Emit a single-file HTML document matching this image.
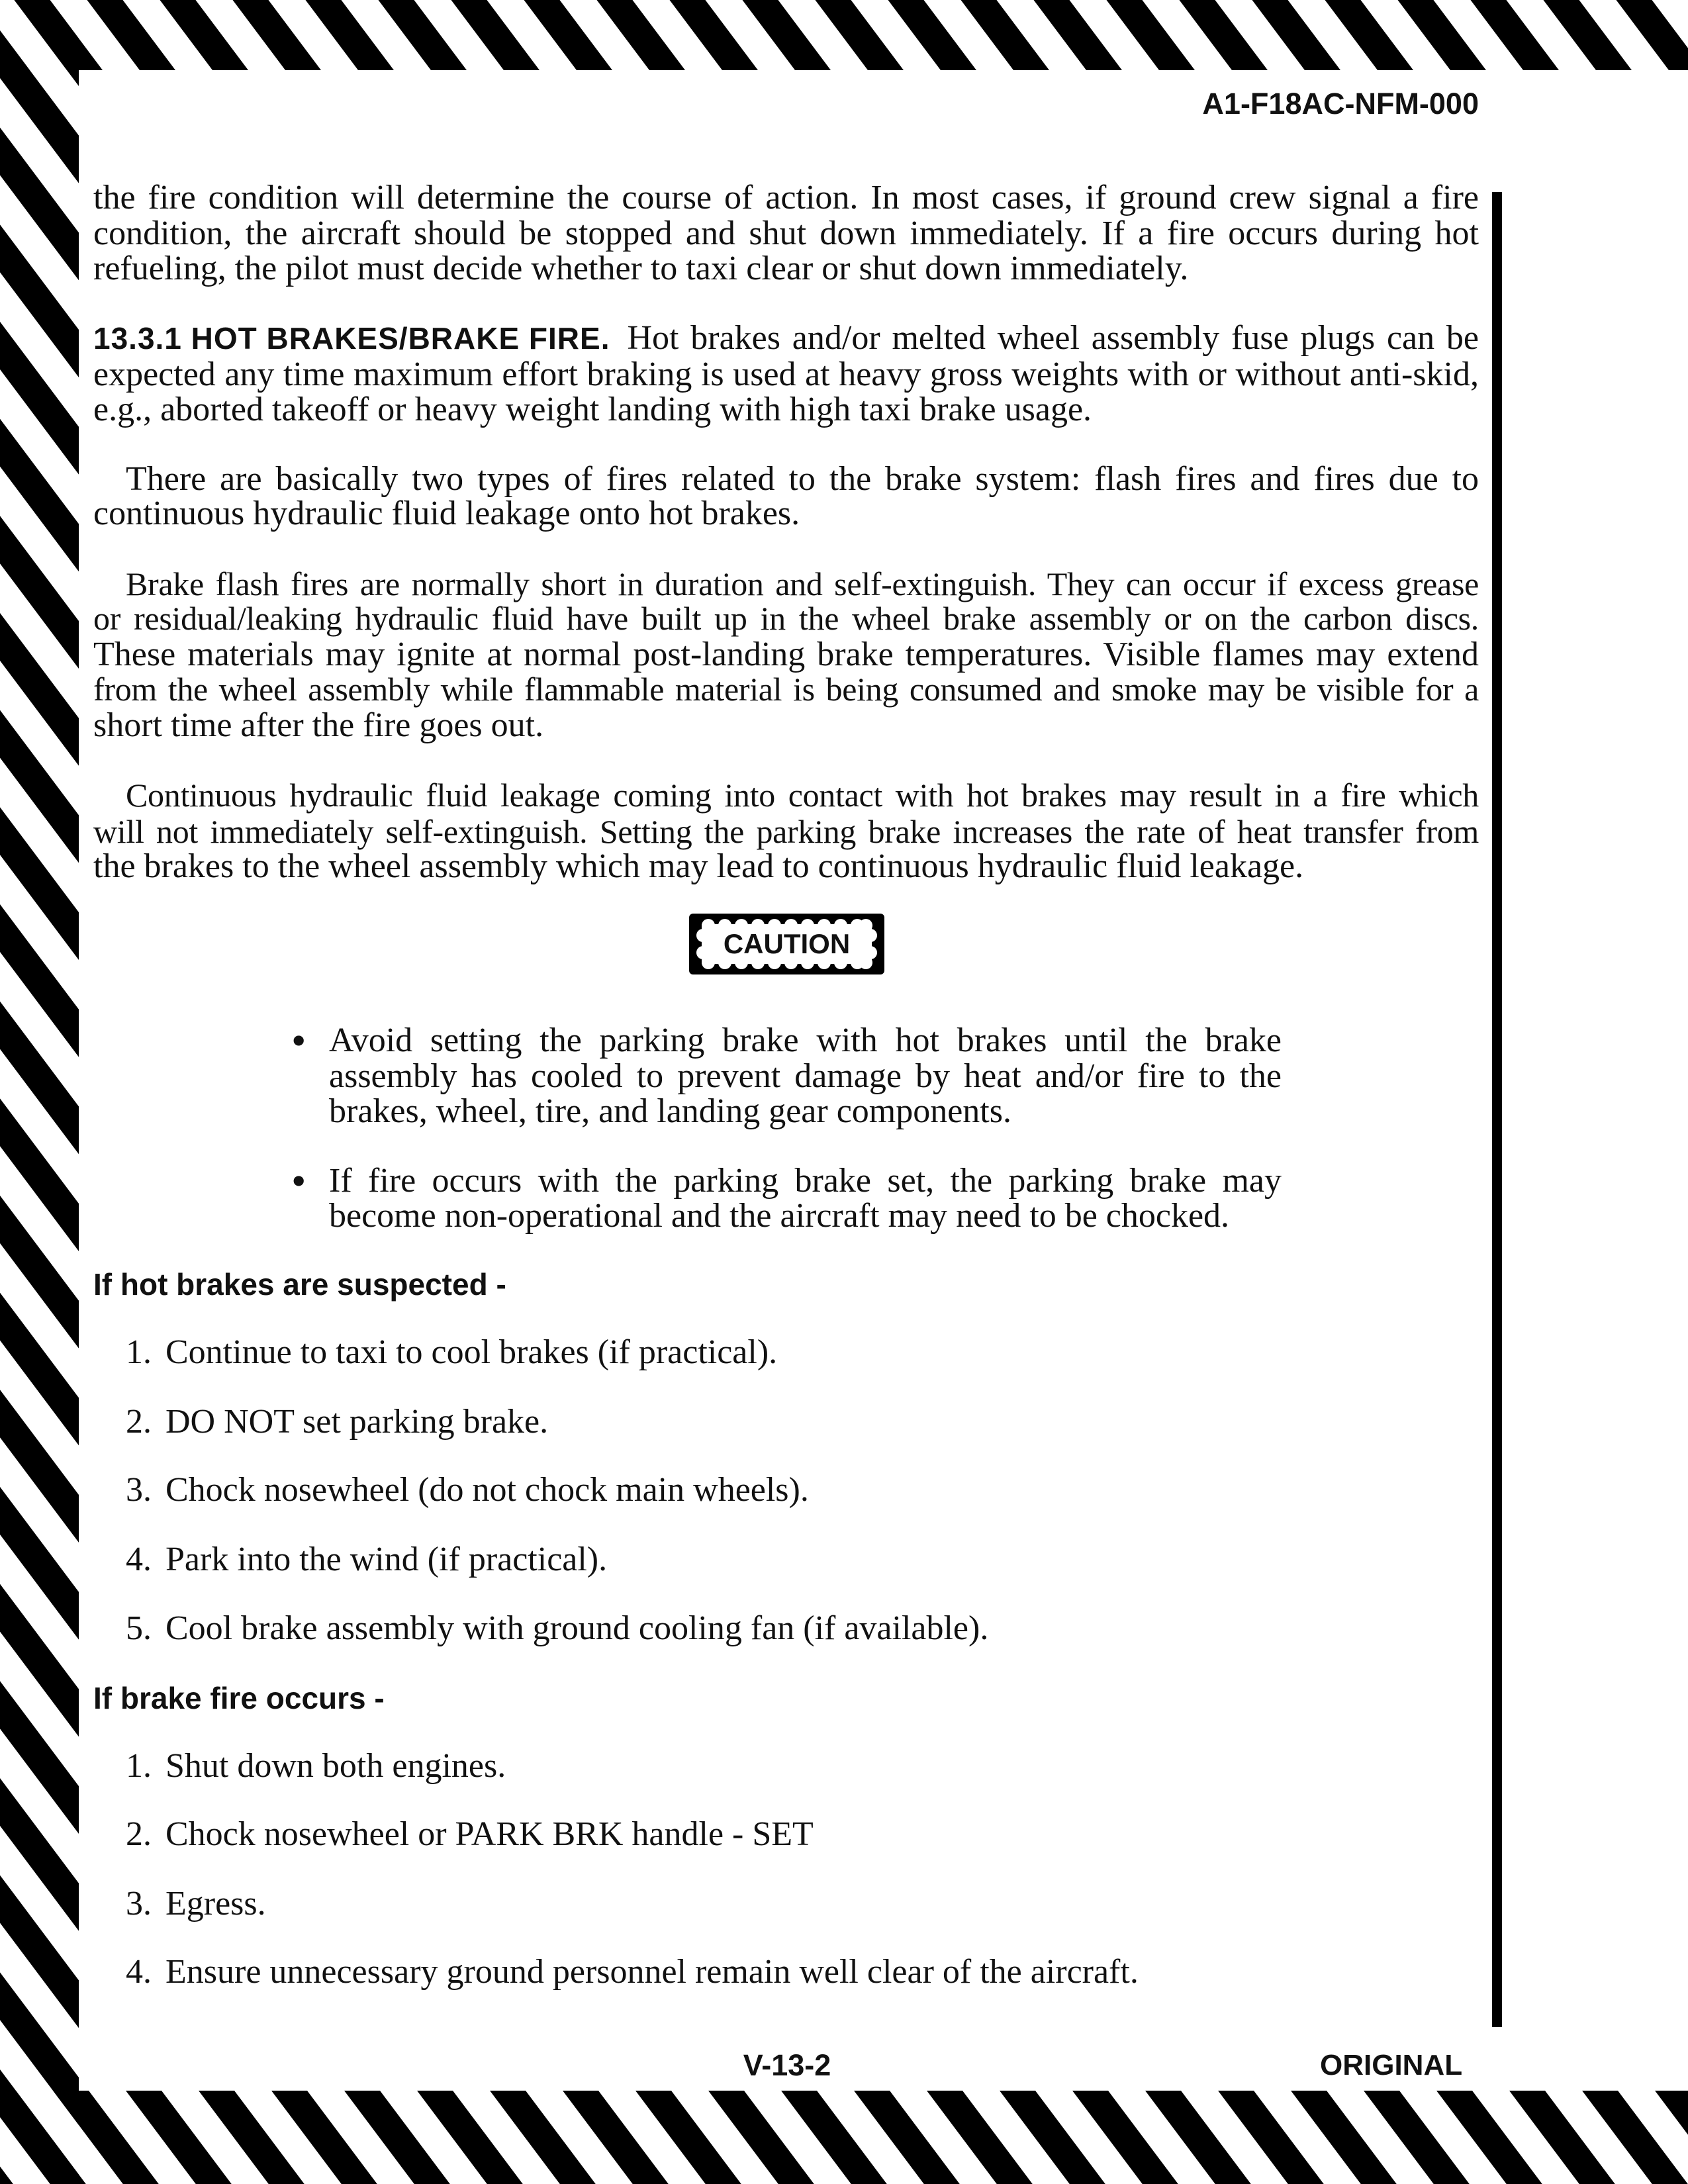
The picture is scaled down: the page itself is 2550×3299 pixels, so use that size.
<!DOCTYPE html>
<html><head><meta charset="utf-8">
<style>
html,body{margin:0;padding:0;}
body{width:2550px;height:3299px;position:relative;overflow:hidden;background:#fff;}
svg.bg{position:absolute;left:0;top:0;}
.l{position:absolute;font-family:"Liberation Serif",serif;font-size:52px;line-height:54px;color:#111;white-space:nowrap;}
.j{text-align:justify;text-align-last:justify;white-space:normal;height:54px;overflow:visible;}
.t{font-size:50px;letter-spacing:-0.3px;}
.s{font-family:"Liberation Sans",sans-serif;font-weight:bold;}
</style></head><body>
<svg class="bg" width="2550" height="3299" viewBox="0 0 2550 3299">
<defs>
<pattern id="st" patternUnits="userSpaceOnUse" width="110" height="20" patternTransform="translate(131.5,0) skewX(36.87)">
<rect x="0" y="0" width="54" height="20" fill="#000"/>
</pattern>
</defs>
<rect x="0" y="0" width="2550" height="106" fill="url(#st)"/>
<rect x="0" y="0" width="119" height="3299" fill="url(#st)"/>
<rect x="0" y="3158" width="2550" height="141" fill="url(#st)"/>
<rect x="2254" y="290" width="15" height="2772" fill="#000"/>
<g>
<rect x="1041" y="1380" width="295" height="92" rx="6" fill="#000"/>
<rect x="1060" y="1396" width="257" height="60" fill="#fff"/>
<g fill="#fff">
<circle cx="1070" cy="1398" r="10"/><circle cx="1095" cy="1398" r="10"/><circle cx="1120" cy="1398" r="10"/><circle cx="1145" cy="1398" r="10"/><circle cx="1170" cy="1398" r="10"/><circle cx="1195" cy="1398" r="10"/><circle cx="1220" cy="1398" r="10"/><circle cx="1245" cy="1398" r="10"/><circle cx="1270" cy="1398" r="10"/><circle cx="1295" cy="1398" r="10"/><circle cx="1308" cy="1398" r="10"/>
<circle cx="1070" cy="1454" r="10"/><circle cx="1095" cy="1454" r="10"/><circle cx="1120" cy="1454" r="10"/><circle cx="1145" cy="1454" r="10"/><circle cx="1170" cy="1454" r="10"/><circle cx="1195" cy="1454" r="10"/><circle cx="1220" cy="1454" r="10"/><circle cx="1245" cy="1454" r="10"/><circle cx="1270" cy="1454" r="10"/><circle cx="1295" cy="1454" r="10"/><circle cx="1308" cy="1454" r="10"/>
<circle cx="1062" cy="1413" r="10"/><circle cx="1062" cy="1439" r="10"/>
<circle cx="1315" cy="1413" r="10"/><circle cx="1315" cy="1439" r="10"/>
</g>
</g>
</svg>

<div class="l s" style="left:1700px;top:130px;width:534px;text-align:right;font-size:45px;">A1-F18AC-NFM-000</div>

<div class="l j" style="left:141px;top:272px;width:2093px;">the fire condition will determine the course of action. In most cases, if ground crew signal a fire</div>
<div class="l j" style="left:141px;top:326px;width:2093px;">condition, the aircraft should be stopped and shut down immediately. If a fire occurs during hot</div>
<div class="l" style="left:141px;top:379px;">refueling, the pilot must decide whether to taxi clear or shut down immediately.</div>

<div class="l" style="left:141px;top:484px;width:2093px;display:flex;justify-content:space-between;"><span class="s" style="font-size:46px;letter-spacing:1px;">13.3.1 HOT BRAKES/BRAKE FIRE.</span><span style="flex:1;margin-left:26px;text-align:justify;text-align-last:justify;white-space:normal;">Hot brakes and/or melted wheel assembly fuse plugs can be</span></div>
<div class="l j" style="left:141px;top:539px;width:2093px;">expected any time maximum effort braking is used at heavy gross weights with or without anti-skid,</div>
<div class="l" style="left:141px;top:592px;">e.g., aborted takeoff or heavy weight landing with high taxi brake usage.</div>

<div class="l j" style="left:190px;top:697px;width:2044px;">There are basically two types of fires related to the brake system: flash fires and fires due to</div>
<div class="l" style="left:141px;top:749px;">continuous hydraulic fluid leakage onto hot brakes.</div>

<div class="l j t" style="left:190px;top:855px;width:2044px;">Brake flash fires are normally short in duration and self-extinguish. They can occur if excess grease</div>
<div class="l j t" style="left:141px;top:907px;width:2093px;">or residual/leaking hydraulic fluid have built up in the wheel brake assembly or on the carbon discs.</div>
<div class="l j" style="left:141px;top:962px;width:2093px;">These materials may ignite at normal post-landing brake temperatures. Visible flames may extend</div>
<div class="l j t" style="left:141px;top:1014px;width:2093px;">from the wheel assembly while flammable material is being consumed and smoke may be visible for a</div>
<div class="l" style="left:141px;top:1069px;">short time after the fire goes out.</div>

<div class="l j t" style="left:190px;top:1174px;width:2044px;">Continuous hydraulic fluid leakage coming into contact with hot brakes may result in a fire which</div>
<div class="l j t" style="left:141px;top:1229px;width:2093px;">will not immediately self-extinguish. Setting the parking brake increases the rate of heat transfer from</div>
<div class="l" style="left:141px;top:1282px;">the brakes to the wheel assembly which may lead to continuous hydraulic fluid leakage.</div>

<div class="l s" style="left:1041px;top:1399px;width:295px;text-align:center;font-size:42px;">CAUTION</div>

<div class="l" style="left:440px;top:1545px;font-size:64px;">•</div>
<div class="l j" style="left:497px;top:1545px;width:1439px;">Avoid setting the parking brake with hot brakes until the brake</div>
<div class="l j" style="left:497px;top:1599px;width:1439px;">assembly has cooled to prevent damage by heat and/or fire to the</div>
<div class="l" style="left:497px;top:1652px;">brakes, wheel, tire, and landing gear components.</div>
<div class="l" style="left:440px;top:1757px;font-size:64px;">•</div>
<div class="l j" style="left:497px;top:1757px;width:1439px;">If fire occurs with the parking brake set, the parking brake may</div>
<div class="l" style="left:497px;top:1810px;">become non-operational and the aircraft may need to be chocked.</div>

<div class="l s" style="left:141px;top:1913px;font-size:46px;">If hot brakes are suspected -</div>
<div class="l" style="left:190px;top:2016px;">1.</div><div class="l" style="left:250px;top:2016px;">Continue to taxi to cool brakes (if practical).</div>
<div class="l" style="left:190px;top:2121px;">2.</div><div class="l" style="left:250px;top:2121px;">DO NOT set parking brake.</div>
<div class="l" style="left:190px;top:2224px;">3.</div><div class="l" style="left:250px;top:2224px;">Chock nosewheel (do not chock main wheels).</div>
<div class="l" style="left:190px;top:2329px;">4.</div><div class="l" style="left:250px;top:2329px;">Park into the wind (if practical).</div>
<div class="l" style="left:190px;top:2433px;">5.</div><div class="l" style="left:250px;top:2433px;">Cool brake assembly with ground cooling fan (if available).</div>

<div class="l s" style="left:141px;top:2538px;font-size:46px;">If brake fire occurs -</div>
<div class="l" style="left:190px;top:2641px;">1.</div><div class="l" style="left:250px;top:2641px;">Shut down both engines.</div>
<div class="l" style="left:190px;top:2744px;">2.</div><div class="l" style="left:250px;top:2744px;">Chock nosewheel or PARK BRK handle - SET</div>
<div class="l" style="left:190px;top:2849px;">3.</div><div class="l" style="left:250px;top:2849px;">Egress.</div>
<div class="l" style="left:190px;top:2952px;">4.</div><div class="l" style="left:250px;top:2952px;">Ensure unnecessary ground personnel remain well clear of the aircraft.</div>

<div class="l s" style="left:1089px;top:3093px;width:200px;text-align:center;font-size:45px;">V-13-2</div>
<div class="l s" style="left:1994px;top:3093px;font-size:44px;">ORIGINAL</div>
</body></html>
